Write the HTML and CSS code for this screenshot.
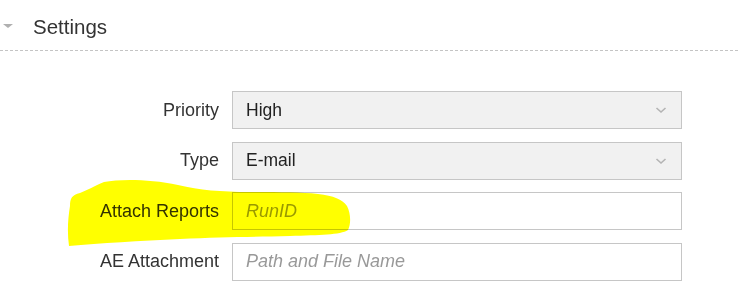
FILE: index.html
```html
<!DOCTYPE html>
<html lang="en">
<head>
  <meta charset="UTF-8" />
  <title>Settings</title>
  <link rel="stylesheet" href="styles.css">
</head>
<body>
  <div class="panel">
    <div class="panel-head">
      <span class="caret"></span>
      <span class="panel-title">Settings</span>
    </div>

    <form class="settings-form">
      <div class="row">
        <label for="priority">Priority</label>
        <div class="select-box" id="priority">
          <span>High</span>
          <svg class="chev" width="12" height="8" viewBox="0 0 12 8"><path d="M1.5 2 L6 6 L10.5 2" fill="none" stroke="#b4b4b4" stroke-width="1.6"/></svg>
        </div>
      </div>
      <div class="row">
        <label for="type">Type</label>
        <div class="select-box" id="type">
          <span>E-mail</span>
          <svg class="chev" width="12" height="8" viewBox="0 0 12 8"><path d="M1.5 2 L6 6 L10.5 2" fill="none" stroke="#b4b4b4" stroke-width="1.6"/></svg>
        </div>
      </div>
      <div class="row">
        <label for="reports">Attach Reports</label>
        <input type="text" id="reports" placeholder="RunID">
      </div>
      <div class="row">
        <label for="ae">AE Attachment</label>
        <input type="text" id="ae" placeholder="Path and File Name">
      </div>
    </form>

    <!-- marker highlight drawn over the page -->
    <svg class="marker" width="740" height="307" viewBox="0 0 740 307">
      <path d="M70 206 C70 198 72 195 80 193 C88 190 94 186 104 182 C120 179 150 179 178 185 C200 190 220 192 250 192 C280 192 300 192 318 194 C334 196 342 199 347 206 C351 214 351 224 348 230 C340 235 320 235 290 236 C250 237 220 237 180 239 C140 241 100 243 69 246 C67 232 68 218 70 206 Z" fill="#ffff00"/>
    </svg>
  </div>
</body>
</html>
```

FILE: styles.css
```css
* {
  margin: 0;
  padding: 0;
  box-sizing: border-box;
}
body {
  font-family: 'Liberation Sans', Arial, sans-serif;
  background: #fff;
  color: #333;
}
.panel {
  position: relative;
  width: 740px;
  height: 307px;
  overflow: hidden;
}
.panel-head {
  height: 51px;
  display: flex;
  align-items: center;
  padding-top: 2px;
  background: repeating-linear-gradient(90deg, #c4c4c4 0 3px, transparent 3px 5px) left 50px / 100% 1px no-repeat;
}
.caret {
  width: 0;
  height: 0;
  margin-left: 3px;
  margin-right: 20px;
  margin-bottom: 2px;
  border-left: 5px solid transparent;
  border-right: 5px solid transparent;
  border-top: 4px solid #b0b0b0;
}
.panel-title {
  font-size: 20.5px;
  color: #333;
}
.settings-form {
  padding-top: 40px;
  display: flex;
  flex-direction: column;
  gap: 12.5px;
}
.row {
  display: flex;
  align-items: center;
  height: 38px;
}
.row label {
  width: 219px;
  text-align: right;
  font-size: 18px;
  color: #333;
  margin-right: 13px;
}
.select-box,
.row input {
  width: 450px;
  height: 38px;
  border: 1px solid #c6c6c6;
  font-family: inherit;
  font-size: 17.5px;
  padding: 0 13px;
}
.select-box {
  display: flex;
  align-items: center;
  justify-content: space-between;
  background: #f1f1f1;
  color: #222;
}
.chev {
  margin-right: 1px;
}
.row input {
  background: #fff;
  color: #222;
  font-size: 18px;
  outline: none;
}
.row input::placeholder {
  color: #999;
  font-style: italic;
}
.marker {
  position: absolute;
  top: 0;
  left: 0;
  mix-blend-mode: multiply;
  pointer-events: none;
}
```
